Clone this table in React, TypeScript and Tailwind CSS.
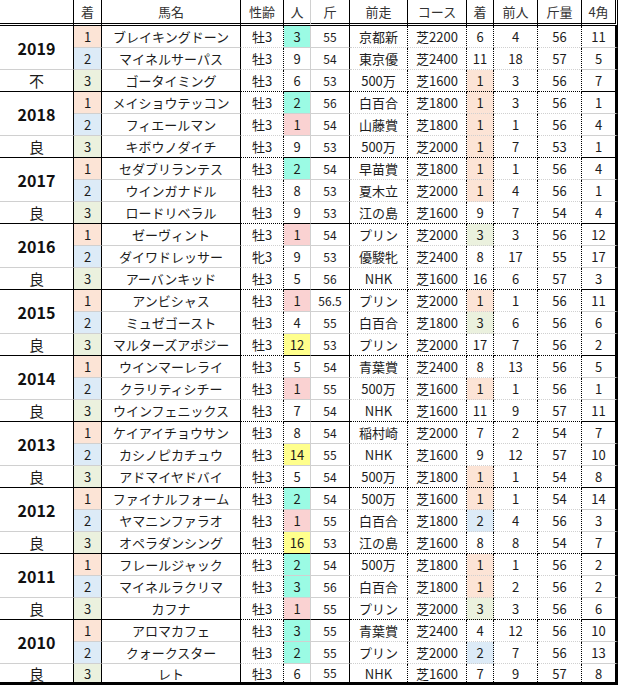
import React from "react";

type Row = [number, string, string, number, string, string, string, number, number, number, number];

type Group = { year: string; cond: string; rows: Row[] };

const groups: Group[] = [
  {
    year: "2019",
    cond: "不",
    rows: [
      [1, "ブレイキングドーン", "牡3", 3, "55", "京都新", "芝2200", 6, 4, 56, 11],
      [2, "マイネルサーパス", "牡3", 9, "54", "東京優", "芝2400", 11, 18, 57, 5],
      [3, "ゴータイミング", "牡3", 6, "53", "500万", "芝1600", 1, 3, 56, 7],
    ],
  },
  {
    year: "2018",
    cond: "良",
    rows: [
      [1, "メイショウテッコン", "牡3", 2, "56", "白百合", "芝1800", 1, 3, 56, 1],
      [2, "フィエールマン", "牡3", 1, "54", "山藤賞", "芝1800", 1, 1, 56, 4],
      [3, "キボウノダイチ", "牡3", 9, "53", "500万", "芝2000", 1, 7, 53, 1],
    ],
  },
  {
    year: "2017",
    cond: "良",
    rows: [
      [1, "セダブリランテス", "牡3", 2, "54", "早苗賞", "芝1800", 1, 1, 56, 4],
      [2, "ウインガナドル", "牡3", 8, "53", "夏木立", "芝2000", 1, 4, 56, 1],
      [3, "ロードリベラル", "牡3", 9, "53", "江の島", "芝1600", 9, 7, 54, 4],
    ],
  },
  {
    year: "2016",
    cond: "良",
    rows: [
      [1, "ゼーヴィント", "牡3", 1, "54", "プリン", "芝2000", 3, 3, 56, 12],
      [2, "ダイワドレッサー", "牝3", 9, "53", "優駿牝", "芝2400", 8, 17, 55, 17],
      [3, "アーバンキッド", "牡3", 5, "56", "NHK", "芝1600", 16, 6, 57, 3],
    ],
  },
  {
    year: "2015",
    cond: "良",
    rows: [
      [1, "アンビシャス", "牡3", 1, "56.5", "プリン", "芝2000", 1, 1, 56, 11],
      [2, "ミュゼゴースト", "牡3", 4, "55", "白百合", "芝1800", 3, 6, 56, 6],
      [3, "マルターズアポジー", "牡3", 12, "53", "プリン", "芝2000", 17, 7, 56, 2],
    ],
  },
  {
    year: "2014",
    cond: "良",
    rows: [
      [1, "ウインマーレライ", "牡3", 5, "54", "青葉賞", "芝2400", 8, 13, 56, 5],
      [2, "クラリティシチー", "牡3", 1, "55", "500万", "芝1600", 1, 1, 56, 1],
      [3, "ウインフェニックス", "牡3", 7, "54", "NHK", "芝1600", 11, 9, 57, 11],
    ],
  },
  {
    year: "2013",
    cond: "良",
    rows: [
      [1, "ケイアイチョウサン", "牡3", 8, "54", "稲村崎", "芝2000", 7, 2, 54, 7],
      [2, "カシノピカチュウ", "牡3", 14, "55", "NHK", "芝1600", 9, 12, 57, 10],
      [3, "アドマイヤドバイ", "牡3", 5, "54", "500万", "芝1800", 1, 1, 54, 8],
    ],
  },
  {
    year: "2012",
    cond: "良",
    rows: [
      [1, "ファイナルフォーム", "牡3", 2, "54", "500万", "芝1600", 1, 1, 54, 14],
      [2, "ヤマニンファラオ", "牡3", 1, "55", "白百合", "芝1800", 2, 4, 56, 3],
      [3, "オペラダンシング", "牡3", 16, "53", "江の島", "芝1600", 8, 8, 54, 7],
    ],
  },
  {
    year: "2011",
    cond: "良",
    rows: [
      [1, "フレールジャック", "牡3", 2, "54", "500万", "芝1800", 1, 1, 56, 2],
      [2, "マイネルラクリマ", "牡3", 3, "56", "白百合", "芝1800", 1, 2, 56, 2],
      [3, "カフナ", "牡3", 1, "55", "プリン", "芝2000", 3, 3, 56, 6],
    ],
  },
  {
    year: "2010",
    cond: "良",
    rows: [
      [1, "アロマカフェ", "牡3", 3, "55", "青葉賞", "芝2400", 4, 12, 56, 10],
      [2, "クォークスター", "牡3", 2, "55", "プリン", "芝2000", 2, 7, 56, 13],
      [3, "レト", "牡3", 6, "55", "NHK", "芝1600", 7, 9, 57, 8],
    ],
  },
];

const rankBg = (n: number) =>
  n === 1 ? "bg-[#fce4d6]" : n === 2 ? "bg-[#ddebf7]" : n === 3 ? "bg-[#ebf1de]" : "";

const popBg = (n: number) =>
  n === 1 ? "bg-[#fad2d2]" : n <= 3 ? "bg-[#9bfbe4]" : n >= 10 ? "bg-[#ffff8c]" : "";

const solid = "border-r border-r-black";
const dotted = "border-r border-r-black border-dotted";
const gray = "border-r border-r-[#d0d0d0]";
const edge = "border-r-[3px] border-r-black";

const headers: { label: string; r: string }[] = [
  { label: "", r: solid },
  { label: "着", r: solid },
  { label: "馬名", r: solid },
  { label: "性齢", r: dotted },
  { label: "人", r: gray },
  { label: "斤", r: solid },
  { label: "前走", r: dotted },
  { label: "コース", r: dotted },
  { label: "着", r: dotted },
  { label: "前人", r: dotted },
  { label: "斤量", r: dotted },
  { label: "4角", r: edge },
];

export default function App() {
  return (
    <div className="w-[618px] bg-white text-[#1c1c1c] text-[13px] leading-none font-['Noto_Sans_CJK_JP','Noto_Sans',sans-serif]">
      <div className="grid grid-cols-[74px_28px_139px_43px_27px_39px_58px_59px_27px_44px_44px_36px] border-b-[3px] border-b-black">
        {headers.map((h, i) => (
          <div
            key={i}
            className={`${h.r} h-[26px] border-b-[3px] border-b-black border-double text-[#333] flex items-center justify-center`}
          >
            {h.label}
          </div>
        ))}
        {groups.map((g, gi) => {
          const lastGroup = gi === groups.length - 1;
          return g.rows.map((r, ri) => {
            const bottom =
              ri === 2
                ? lastGroup
                  ? ""
                  : "border-b border-b-black"
                : "border-b border-b-[#d0d0d0]";
            const h = ri === 2 && lastGroup ? "h-[18px]" : "h-[22px]";
            const c = `${bottom} ${h} flex items-center justify-center`;
            return (
              <React.Fragment key={`${gi}-${ri}`}>
                {ri === 0 && (
                  <div className={`${solid} row-span-2 h-[44px] border-b border-b-[#d0d0d0] flex items-center justify-center text-[16px] font-bold text-[#111]`}>
                    {g.year}
                  </div>
                )}
                {ri === 2 && <div className={`${solid} ${c} text-[15px]`}>{g.cond}</div>}
                <div className={`${solid} ${c} ${rankBg(r[0])}`}>{r[0]}</div>
                <div className={`${solid} ${c} whitespace-nowrap`}>{r[1]}</div>
                <div className={`${dotted} ${c}`}>{r[2]}</div>
                <div className={`${gray} ${c} ${popBg(r[3])}`}>{r[3]}</div>
                <div className={`${solid} ${c} text-[12px]`}>{r[4]}</div>
                <div className={`${dotted} ${c}`}>{r[5]}</div>
                <div className={`${dotted} ${c}`}>{r[6]}</div>
                <div className={`${dotted} ${c} ${rankBg(r[7])}`}>{r[7]}</div>
                <div className={`${dotted} ${c}`}>{r[8]}</div>
                <div className={`${dotted} ${c}`}>{r[9]}</div>
                <div className={`${edge} ${c}`}>{r[10]}</div>
              </React.Fragment>
            );
          });
        })}
      </div>
    </div>
  );
}
